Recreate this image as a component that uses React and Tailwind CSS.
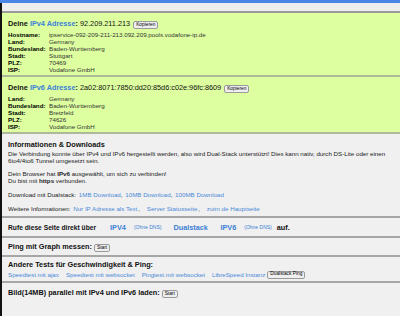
import React from 'react';

const ipv4Rows = [
  ['Hostname:', 'ipservice-092-209-211-213.092.209.pools.vodafone-ip.de'],
  ['Land:', 'Germany'],
  ['Bundesland:', 'Baden-Wurttemberg'],
  ['Stadt:', 'Stuttgart'],
  ['PLZ:', '70469'],
  ['ISP:', 'Vodafone GmbH'],
];

const ipv6Rows = [
  ['Land:', 'Germany'],
  ['Bundesland:', 'Baden-Wurttemberg'],
  ['Stadt:', 'Bretzfeld'],
  ['PLZ:', '74626'],
  ['ISP:', 'Vodafone GmbH'],
];

function SmallButton({ children }) {
  return (
    <span className="inline-flex items-center h-[8px] px-[2px] bg-[#efefef] border border-[#9a9a9a] rounded-[2px] text-[4.8px] leading-none text-black font-normal">
      {children}
    </span>
  );
}

function IpBox({ version, address, rows }) {
  return (
    <div className="bg-[#ddffa0] pl-[6px] pt-[6px] pb-[2.5px] border-b-2 border-[#aeb89a]">
      <div className="flex items-center h-[10px] leading-[10px] text-[7.3px] text-[#111]">
        <span className="font-bold">Deine&nbsp;</span>
        <span className="font-bold text-[#3c7fd6]">{version} Adresse</span>
        <span className="font-bold">:</span>
        <span>&nbsp;{address}</span>
        <span className="ml-[3px]">
          <SmallButton>Kopieren</SmallButton>
        </span>
      </div>
      <div className="mt-[1.5px] grid grid-cols-[41px_1fr] text-[6.2px] leading-[7px]">
        {rows.map(([label, value]) => (
          <React.Fragment key={label}>
            <span className="font-bold text-black">{label}</span>
            <span className="text-[#333] whitespace-nowrap">{value}</span>
          </React.Fragment>
        ))}
      </div>
    </div>
  );
}

function Link({ children, className = '' }) {
  return <span className={`text-[#4a8ad8] ${className}`}>{children}</span>;
}

export default function App() {
  return (
    <div className="w-[400px] h-[316px] overflow-hidden bg-[#f0f0f0] font-['Liberation_Sans',Arial,sans-serif] text-[#222]">
      <div className="h-[3px] bg-[#4a86e8]" />
      <div className="border-l-2 border-[#111] h-[313px]">
        <div className="h-[10px] bg-[#eeeeee] border-b-2 border-[#9a9a9a]" />

        <IpBox version="IPv4" address="92.209.211.213" rows={ipv4Rows} />
        <IpBox version="IPv6" address="2a02:8071:7850:dd20:85d6:c02e:96fc:8609" rows={ipv6Rows} />

        {/* Informationen */}
        <div className="pl-[6px] pt-[6px] pb-[4.5px] border-b-2 border-[#a6a6a6]">
          <div className="h-[10px] leading-[10px] text-[7.3px] font-bold text-[#111]">Informationen &amp; Downloads</div>
          <p className="text-[6.2px] leading-[7px] whitespace-nowrap">
            Die Verbindung konnte über IPv4 und IPv6 hergestellt werden, also wird Dual-Stack unterstützt! Dies kann nativ, durch DS-Lite oder einen
            <br />
            6to4/4to6 Tunnel umgesetzt sein.
          </p>
          <p className="mt-[6px] text-[6.2px] leading-[7px]">
            Dein Browser hat <b>IPv6</b> ausgewählt, um sich zu verbinden!
            <br />
            Du bist mit <b>https</b> verbunden.
          </p>
          <p className="mt-[6.5px] text-[6.2px] leading-[7px]">
            Download mit Dualstack: <Link className="ml-[1px]">1MB Download</Link>,{' '}
            <Link className="ml-[1px]">10MB Download</Link>, <Link className="ml-[1px]">100MB Download</Link>
          </p>
          <p className="mt-[7px] text-[6.2px] leading-[7px]">
            Weitere Informationen: <Link className="ml-[1px] mr-[1px]">Nur IP Adresse als Text</Link>,{' '}
            <Link className="ml-[5px] mr-[1px]">Server Statusseite</Link>, <Link className="ml-[5px]">zuim de Hauptseite</Link>
          </p>
        </div>

        {/* Rufe diese Seite */}
        <div className="pl-[6px] pt-[5px] pb-[2.5px] border-b-2 border-[#a6a6a6]">
          <div className="flex items-center h-[10px] leading-[10px] text-[6.7px] font-bold text-[#111]">
            <span>Rufe diese Seite direkt über</span>
            <span className="ml-[14px] text-[7.3px] text-[#3c7fd6]">IPV4</span>
            <span className="ml-[8px] -mt-[2px] text-[5px] font-normal text-[#3c7fd6] leading-none">(Ohne DNS)</span>
            <span className="ml-[12px] text-[7.3px] text-[#3c7fd6]">Dualstack</span>
            <span className="ml-[12.5px] text-[7.3px] text-[#3c7fd6]">IPV6</span>
            <span className="ml-[8px] -mt-[2px] text-[5px] font-normal text-[#3c7fd6] leading-none">(Ohne DNS)</span>
            <span className="ml-[5px] text-[7.3px]">auf.</span>
          </div>
        </div>

        {/* Ping */}
        <div className="pl-[6px] pt-[4.5px] pb-[3px] border-b-2 border-[#a6a6a6]">
          <div className="flex items-center h-[10px] leading-[10px] text-[7.3px] font-bold text-[#111]">
            <span>Ping mit Graph messen:</span>
            <span className="ml-[2px]">
              <SmallButton>Start</SmallButton>
            </span>
          </div>
        </div>

        {/* Andere Tests */}
        <div className="pl-[6px] pt-[3px] pb-[3px] border-b-2 border-[#a6a6a6]">
          <div className="h-[10px] leading-[10px] text-[7.3px] font-bold text-[#111]">Andere Tests für Geschwindigkeit &amp; Ping:</div>
          <div className="flex items-center gap-[7px] h-[8px] text-[6.2px] leading-[7px] whitespace-nowrap">
            <Link>Speedtest mit ajax</Link>
            <Link>Speedtest mit websocket</Link>
            <Link>Pingtest mit websocket</Link>
            <Link>LibreSpeed Instanz</Link>
            <span className="-ml-[5px]">
              <SmallButton>Dualstack Ping</SmallButton>
            </span>
          </div>
        </div>

        {/* Bild */}
        <div className="pl-[6px] pt-[5px]">
          <div className="flex items-center h-[10px] leading-[10px] text-[7.3px] font-bold text-[#111]">
            <span>Bild(14MB) parallel mit IPv4 und IPv6 laden:</span>
            <span className="ml-[2px]">
              <SmallButton>Start</SmallButton>
            </span>
          </div>
        </div>
      </div>
    </div>
  );
}
